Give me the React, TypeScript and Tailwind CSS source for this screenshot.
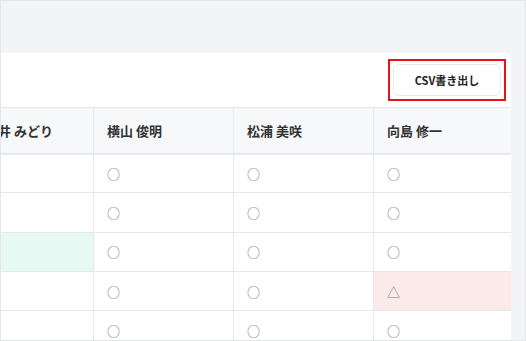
import React from "react";

const members = ["今井 みどり", "横山 俊明", "松浦 美咲", "向島 修一"];

type Cell = { mark: string; tone?: "ok" | "warn" };

const rows: Cell[][] = [
  [{ mark: "" }, { mark: "○" }, { mark: "○" }, { mark: "○" }],
  [{ mark: "" }, { mark: "○" }, { mark: "○" }, { mark: "○" }],
  [{ mark: "", tone: "ok" }, { mark: "○" }, { mark: "○" }, { mark: "○" }],
  [{ mark: "" }, { mark: "○" }, { mark: "○" }, { mark: "△", tone: "warn" }],
  [{ mark: "" }, { mark: "○" }, { mark: "○" }, { mark: "○" }],
];

const widths = ["w-[122px]", "w-[140px]", "w-[140px]", "w-[140px]"];

export default function App() {
  return (
    <div
      className="w-[526px] h-[341px] bg-[#f3f4f6] border border-[#e4e6ea] pt-[52px] pr-[14px] overflow-hidden"
      style={{ fontFamily: '"Noto Sans CJK JP", "Noto Sans", sans-serif' }}
    >
      <div className="bg-white rounded-tr-[5px] h-full overflow-hidden">
        {/* Toolbar */}
        <div className="h-[54px] flex items-center justify-end pr-[5px]">
          <div className="border-2 border-[#e8141c] p-[3px]">
            <button className="w-[108px] h-[32px] rounded-[6px] border border-[#e6e9ee] bg-white text-[11px] font-bold text-[#222] flex items-center justify-center">
              CSV書き出し
            </button>
          </div>
        </div>

        {/* Table (scrolled horizontally) */}
        <div className="overflow-hidden">
          <table className="table-fixed border-collapse -ml-[30px] w-[542px]">
            <thead>
              <tr className="h-[46px] bg-[#f7f8fa] border-t border-b-2 border-[#e6e8ec]">
                {members.map((name, i) => (
                  <th
                    key={name}
                    className={`${widths[i]} px-[13px] text-left text-[13px] font-bold text-[#333] border-l border-[#e6e8ec] whitespace-nowrap`}
                  >
                    {name}
                  </th>
                ))}
              </tr>
            </thead>
            <tbody>
              {rows.map((row, r) => (
                <tr key={r} className="h-[39.3px] border-b border-[#e6e8ec]">
                  {row.map((cell, c) => (
                    <td
                      key={c}
                      className={`pl-[13px] pr-[13px] text-[13px] leading-none text-[#7a7a7a] border-l border-[#e6e8ec] ${
                        cell.tone === "ok" ? "bg-[#e6faf3]" : cell.tone === "warn" ? "bg-[#fbeaea]" : ""
                      }`}
                    >
                      {cell.mark}
                    </td>
                  ))}
                </tr>
              ))}
            </tbody>
          </table>
        </div>
      </div>
    </div>
  );
}
